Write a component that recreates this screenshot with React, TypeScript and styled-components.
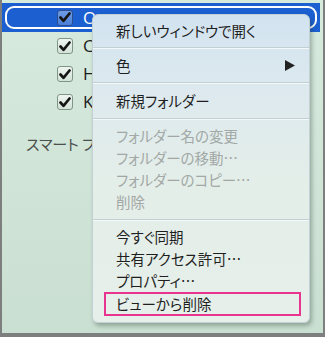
import React from "react";
import styled, { createGlobalStyle } from "styled-components";

const Global = createGlobalStyle`
  html, body { margin: 0; padding: 0; }
  body {
    width: 325px; height: 337px; overflow: hidden;
    font-family: "Noto Sans CJK JP", "Noto Sans", sans-serif;
    font-feature-settings: "palt";
  }
`;

const Frame = styled.div`
  position: relative;
  box-sizing: border-box;
  width: 325px;
  height: 337px;
  border-left: 2px solid #7c7f7e;
  border-right: 2px solid #7c7f7e;
  border-bottom: 4px solid #7c7f7e;
  background: linear-gradient(180deg, #d6eadd 0%, #cfe4d7 60%, #c9dfd1 100%);
  overflow: hidden;
`;

const Tree = styled.div`
  display: flex;
  flex-direction: column;
  padding: 3px 3px 0 0;
`;

const Row = styled.div<{ $selected?: boolean }>`
  position: relative;
  display: flex;
  align-items: center;
  gap: 10px;
  height: ${(p) => (p.$selected ? 29 : 28)}px;
  padding-left: 55px;
  background: ${(p) => (p.$selected ? "#1b5fd1" : "transparent")};
  color: ${(p) => (p.$selected ? "#ffffff" : "#1d1d1d")};
  font-family: "Open Sans", "Liberation Sans", sans-serif;
  font-size: 17px;
  line-height: 28px;
  ${(p) =>
    p.$selected &&
    `&::after {
      content: "";
      position: absolute;
      inset: 3px 3px 3px 3px;
      border: 2px solid #ffffff;
      border-radius: 9px;
    }`}
`;

const Box = styled.span<{ $selected?: boolean }>`
  display: inline-flex;
  align-items: center;
  justify-content: center;
  box-sizing: border-box;
  width: 16px;
  height: 16px;
  border-radius: 3px;
  border: 1px solid ${(p) => (p.$selected ? "#2b4f8e" : "#7f9588")};
  background: ${(p) =>
    p.$selected
      ? "linear-gradient(180deg, #6f9be4, #4a7fd8)"
      : "linear-gradient(180deg, #eef5f0, #d3e2d8)"};
`;

const Heading = styled.div`
  margin-top: 17px;
  padding-left: 24px;
  width: 66px;
  overflow: hidden;
  font-size: 15px;
  line-height: 22px;
  color: #4b4f4d;
  white-space: nowrap;
`;

const Menu = styled.div`
  position: absolute;
  left: 90px;
  top: 14px;
  width: 218px;
  height: 309px;
  box-sizing: border-box;
  border-radius: 6px;
  border: 1px solid #c3d1d4;
  background: linear-gradient(180deg, #d2e3f0 0%, #dde9ee 25%, #e4eee9 55%, #e6efe9 100%);
  box-shadow: 2px 3px 4px rgba(40, 60, 50, 0.35);
  display: flex;
  flex-direction: column;
  overflow: hidden;
`;

const Group = styled.div<{ $pad?: boolean }>`
  display: flex;
  flex-direction: column;
  padding: ${(p) => (p.$pad ? "5px 0 6px" : "0")};
`;

const Sep = styled.div`
  height: 0;
  border-top: 1px solid #c2d0d4;
  border-bottom: 1px solid #f3f8f8;
`;

const Item = styled.div<{ $h?: number; $disabled?: boolean }>`
  display: flex;
  align-items: center;
  justify-content: space-between;
  height: ${(p) => p.$h ?? 22}px;
  line-height: 20px;
  padding: 0 14px 0 23px;
  font-size: 14.5px;
  color: ${(p) => (p.$disabled ? "#a2a8a5" : "#1f1f1f")};
  white-space: nowrap;
`;

const Marked = styled.div`
  display: flex;
  align-items: center;
  height: 24px;
  line-height: 20px;
  box-sizing: border-box;
  margin: 0 8px 0 11px;
  padding-left: 10px;
  border: 2px solid #e8348f;
  font-size: 14.5px;
  color: #1f1f1f;
  white-space: nowrap;
`;

const Check = () => (
  <svg width="12" height="11" viewBox="0 0 12 11">
    <path d="M1.5 5.5 L4.5 8.8 L10.5 1.5" fill="none" stroke="#151515" strokeWidth="2.7" strokeLinecap="round" strokeLinejoin="round" />
  </svg>
);

const Arrow = () => (
  <svg width="10" height="11" viewBox="0 0 10 11">
    <path d="M0 0 L10 5.5 L0 11 Z" fill="#222" />
  </svg>
);

const rows = [
  { label: "O", selected: true },
  { label: "C" },
  { label: "H" },
  { label: "K" },
];

export default function App() {
  return (
    <>
      <Global />
      <Frame>
        <Tree>
          {rows.map((r) => (
            <Row key={r.label} $selected={r.selected}>
              <Box $selected={r.selected}>
                <Check />
              </Box>
              <span>{r.label}</span>
            </Row>
          ))}
        </Tree>
        <Heading>スマート フォルダー</Heading>
        <Menu>
          <Item $h={33}>新しいウィンドウで開く</Item>
          <Sep />
          <Item $h={33}>
            色
            <Arrow />
          </Item>
          <Sep />
          <Item $h={35}>新規フォルダー</Item>
          <Sep />
          <Group $pad>
            <Item $disabled>フォルダー名の変更</Item>
            <Item $disabled>フォルダーの移動…</Item>
            <Item $disabled>フォルダーのコピー…</Item>
            <Item $disabled>削除</Item>
          </Group>
          <Sep />
          <Group $pad>
            <Item>今すぐ同期</Item>
            <Item>共有アクセス許可…</Item>
            <Item>プロパティ…</Item>
            <Marked>ビューから削除</Marked>
          </Group>
        </Menu>
      </Frame>
    </>
  );
}
